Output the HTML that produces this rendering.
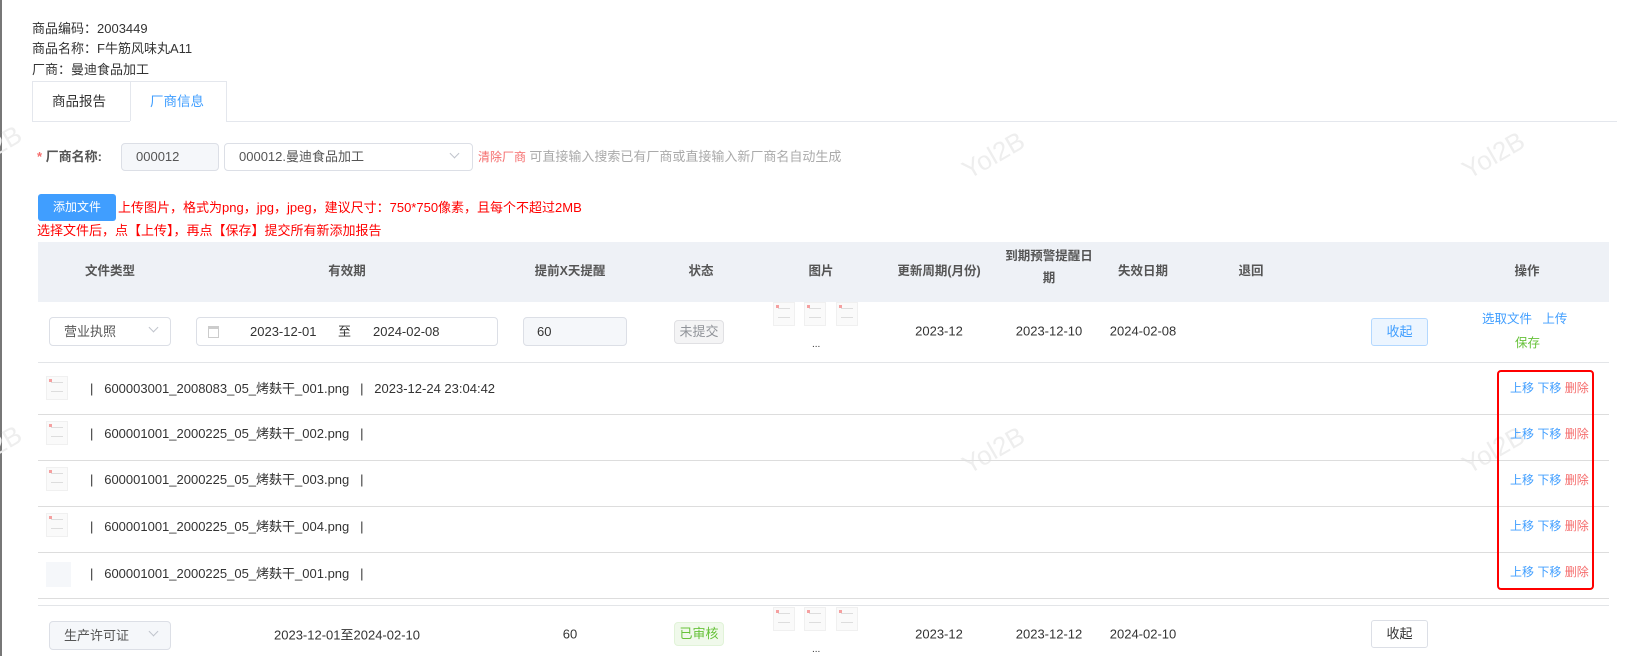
<!DOCTYPE html>
<html><head><meta charset="utf-8"><style>
*{box-sizing:border-box;margin:0;padding:0}
body{width:1636px;height:656px;overflow:hidden;background:#fff;font-family:"Liberation Sans","Noto Sans CJK SC",sans-serif;font-size:13px;color:#333;position:relative}
.a{position:absolute;white-space:nowrap;line-height:16px}
.box{position:absolute;border:1px solid #dcdfe6;border-radius:4px;background:#fff;white-space:nowrap;color:#555}
.th{position:absolute;font-weight:bold;color:#555;font-size:12.5px;text-align:center;transform:translateX(-50%);line-height:30px}
.c{position:absolute;transform:translate(-50%,-50%);white-space:nowrap}
.hl{position:absolute;left:38px;width:1571px;height:1px;background:#e3e5e8}
.blue{color:#409eff}.red{color:#f56c6c}
.thumb{position:absolute;width:22px;height:24px;border:1px solid #f0f0f0;background:#fafafa}
.thumb:before{content:"";position:absolute;left:4px;top:5px;width:12px;height:8px;border-top:1px solid #ddd;border-bottom:1px solid #ddd}
.thumb:after{content:"";position:absolute;left:2px;top:2px;width:3px;height:3px;background:#f5a0a0}
.arrow{position:absolute;width:7px;height:7px;border-right:1px solid #c0c4cc;border-bottom:1px solid #c0c4cc;transform:rotate(45deg)}
.wm{position:absolute;color:#eee;font-size:26px;transform:rotate(-30deg)}
</style></head><body>
<div style="position:absolute;left:0;top:0;width:2px;height:656px;background:#777"></div>
<div class="wm" style="left:-10px;top:125px">2B</div>
<div class="wm" style="left:960px;top:140px">Yol2B</div>
<div class="wm" style="left:1460px;top:140px">Yol2B</div>
<div class="wm" style="left:-10px;top:425px">2B</div>
<div class="wm" style="left:960px;top:435px">Yol2B</div>
<div class="wm" style="left:1460px;top:435px">Yol2B</div>

<div class="a" style="left:32px;top:21px">商品编码：2003449</div>
<div class="a" style="left:32px;top:41px">商品名称：F牛筋风味丸A11</div>
<div class="a" style="left:32px;top:62px">厂商：曼迪食品加工</div>

<div style="position:absolute;left:32px;top:81px;width:195px;height:41px;border:1px solid #e4e7ed;border-bottom:none;background:#fff"></div>
<div style="position:absolute;left:130px;top:81px;width:1px;height:40px;background:#e4e7ed"></div>
<div style="position:absolute;left:227px;top:121px;width:1390px;height:1px;background:#e4e7ed"></div>
<div style="position:absolute;left:32px;top:121px;width:98px;height:1px;background:#e4e7ed"></div>
<div class="a" style="left:52px;top:94px;font-size:13.5px">商品报告</div>
<div class="a blue" style="left:150px;top:94px;font-size:13.5px">厂商信息</div>

<div class="a" style="left:37px;top:149px;font-weight:bold;color:#555"><span class="red">*</span> 厂商名称:</div>
<div class="box" style="left:121px;top:143px;width:98px;height:28px;background:#f5f7fa;line-height:26px;padding-left:14px">000012</div>
<div class="box" style="left:224px;top:143px;width:249px;height:28px;line-height:26px;padding-left:14px">000012.曼迪食品加工</div>
<div class="arrow" style="left:451px;top:150px"></div>
<div class="a" style="left:478px;top:149px;font-size:12px"><span class="red">清除厂商</span> <span style="color:#aaa;font-size:13px">可直接输入搜索已有厂商或直接输入新厂商名自动生成</span></div>

<div style="position:absolute;left:38px;top:194px;width:78px;height:27px;background:#409eff;border-radius:3px;color:#fff;font-size:12px;text-align:center;line-height:27px">添加文件</div>
<div class="a" style="left:118px;top:200px;color:#f00">上传图片，格式为png，jpg，jpeg，建议尺寸：750*750像素，且每个不超过2MB</div>
<div class="a" style="left:37px;top:223px;color:#f00">选择文件后，点【上传】，再点【保存】提交所有新添加报告</div>

<div style="position:absolute;left:38px;top:242px;width:1571px;height:60px;background:#eef1f6"></div>
<div class="th" style="left:110px;top:256px">文件类型</div>
<div class="th" style="left:347px;top:256px">有效期</div>
<div class="th" style="left:570px;top:256px">提前X天提醒</div>
<div class="th" style="left:701px;top:256px">状态</div>
<div class="th" style="left:821px;top:256px">图片</div>
<div class="th" style="left:939px;top:256px">更新周期(月份)</div>
<div class="th" style="left:1049px;top:245px;width:96px;line-height:22px;white-space:normal">到期预警提醒日期</div>
<div class="th" style="left:1143px;top:256px">失效日期</div>
<div class="th" style="left:1251px;top:256px">退回</div>
<div class="th" style="left:1527px;top:256px">操作</div>

<div class="box" style="left:49px;top:317px;width:122px;height:29px;line-height:27px;padding-left:14px">营业执照</div>
<div class="arrow" style="left:150px;top:324px"></div>
<div class="box" style="left:196px;top:317px;width:302px;height:29px;line-height:27px;color:#333">
<span style="position:absolute;left:11px;top:8px;width:11px;height:12px;border:1px solid #ccc;border-top-width:3px"></span>
<span style="position:absolute;left:53px">2023-12-01</span>
<span style="position:absolute;left:141px">至</span>
<span style="position:absolute;left:176px">2024-02-08</span></div>
<div class="box" style="left:523px;top:317px;width:104px;height:29px;background:#f5f7fa;line-height:27px;padding-left:13px;color:#333">60</div>
<div style="position:absolute;left:674px;top:320px;width:50px;height:24px;background:#f4f4f5;border:1px solid #e0e0e3;border-radius:4px;color:#909399;text-align:center;line-height:22px">未提交</div>
<div class="thumb" style="left:773px;top:302px"></div><div class="thumb" style="left:804px;top:302px"></div><div class="thumb" style="left:836px;top:302px"></div>
<div class="a" style="left:812px;top:337px;font-size:10px">...</div>
<div class="c" style="left:939px;top:331px">2023-12</div>
<div class="c" style="left:1049px;top:331px">2023-12-10</div>
<div class="c" style="left:1143px;top:331px">2024-02-08</div>
<div style="position:absolute;left:1371px;top:318px;width:57px;height:28px;background:#ecf5ff;border:1px solid #b3d8ff;border-radius:3px;color:#409eff;text-align:center;line-height:26px">收起</div>
<div class="a blue" style="left:1482px;top:311px;font-size:12.5px">选取文件 &nbsp; 上传</div>
<div class="a" style="left:1515px;top:335px;color:#67c23a;font-size:12.5px">保存</div>
<div class="hl" style="top:362px"></div>

<div class="thumb" style="left:46px;top:376px"></div>
<div class="a" style="left:90px;top:381px">|&nbsp;&nbsp;&nbsp;600003001_2008083_05_烤麸干_001.png &nbsp;&nbsp;| &nbsp;&nbsp;2023-12-24 23:04:42</div>
<div class="hl" style="top:414px;background:#ddd"></div>
<div class="thumb" style="left:46px;top:421px"></div>
<div class="a" style="left:90px;top:426px">|&nbsp;&nbsp;&nbsp;600001001_2000225_05_烤麸干_002.png &nbsp;&nbsp;|</div>
<div class="hl" style="top:460px;background:#ddd"></div>
<div class="thumb" style="left:46px;top:467px"></div>
<div class="a" style="left:90px;top:472px">|&nbsp;&nbsp;&nbsp;600001001_2000225_05_烤麸干_003.png &nbsp;&nbsp;|</div>
<div class="hl" style="top:506px;background:#ddd"></div>
<div class="thumb" style="left:46px;top:513px"></div>
<div class="a" style="left:90px;top:519px">|&nbsp;&nbsp;&nbsp;600001001_2000225_05_烤麸干_004.png &nbsp;&nbsp;|</div>
<div class="hl" style="top:552px;background:#ddd"></div>
<div style="position:absolute;left:46px;top:562px;width:25px;height:25px;background:#f5f7fa"></div>
<div class="a" style="left:90px;top:566px">|&nbsp;&nbsp;&nbsp;600001001_2000225_05_烤麸干_001.png &nbsp;&nbsp;|</div>
<div class="hl" style="top:598px;background:#ddd"></div>
<div class="hl" style="top:605px"></div>

<div style="position:absolute;left:1497px;top:370px;width:97px;height:220px;border:2px solid #f00;border-radius:4px"></div>
<div class="a" style="left:1510px;top:380px;font-size:12px"><span class="blue">上移 下移</span> <span class="red">删除</span></div>
<div class="a" style="left:1510px;top:426px;font-size:12px"><span class="blue">上移 下移</span> <span class="red">删除</span></div>
<div class="a" style="left:1510px;top:472px;font-size:12px"><span class="blue">上移 下移</span> <span class="red">删除</span></div>
<div class="a" style="left:1510px;top:518px;font-size:12px"><span class="blue">上移 下移</span> <span class="red">删除</span></div>
<div class="a" style="left:1510px;top:564px;font-size:12px"><span class="blue">上移 下移</span> <span class="red">删除</span></div>

<div class="box" style="left:49px;top:621px;width:122px;height:29px;background:#f5f7fa;line-height:27px;padding-left:14px">生产许可证</div>
<div class="arrow" style="left:150px;top:628px"></div>
<div class="c" style="left:347px;top:634px">2023-12-01至2024-02-10</div>
<div class="c" style="left:570px;top:634px">60</div>
<div style="position:absolute;left:674px;top:622px;width:50px;height:24px;background:#f0f9eb;border:1px solid #e1f3d8;border-radius:4px;color:#67c23a;text-align:center;line-height:22px">已审核</div>
<div class="thumb" style="left:773px;top:607px"></div><div class="thumb" style="left:804px;top:607px"></div><div class="thumb" style="left:836px;top:607px"></div>
<div class="a" style="left:812px;top:642px;font-size:10px">...</div>
<div class="c" style="left:939px;top:634px">2023-12</div>
<div class="c" style="left:1049px;top:634px">2023-12-12</div>
<div class="c" style="left:1143px;top:634px">2024-02-10</div>
<div style="position:absolute;left:1371px;top:620px;width:57px;height:28px;background:#fff;border:1px solid #dcdfe6;border-radius:3px;text-align:center;line-height:26px">收起</div>
</body></html>
